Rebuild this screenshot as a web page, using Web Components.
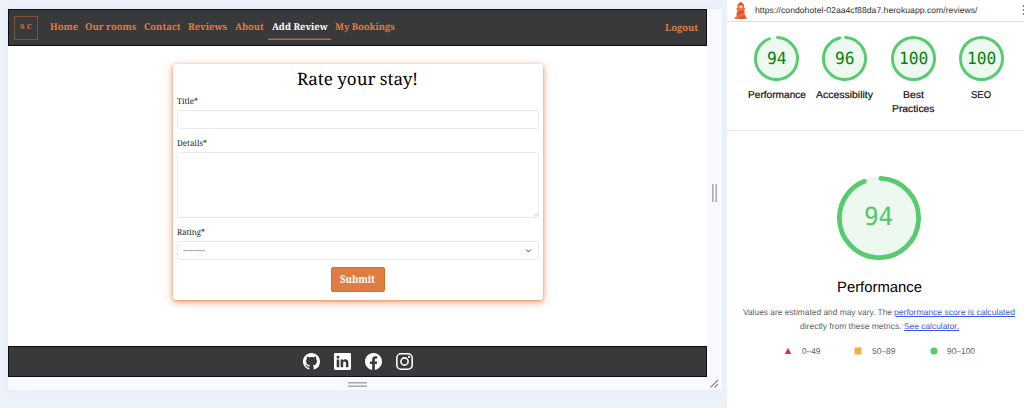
<!DOCTYPE html>
<html lang="en">
<head>
<meta charset="utf-8">
<title>Rate your stay</title>
<style>html,body{margin:0;height:408px;overflow:hidden;background:#ecf1fa;text-rendering:geometricPrecision}</style>
</head>
<body>
<audit-workspace></audit-workspace>
<script>
class Base extends HTMLElement {
  constructor() {
    super();
    this.attachShadow({ mode: 'open' });
  }
  draw(css, html) {
    this.shadowRoot.innerHTML = `<style>*{box-sizing:border-box}${css}</style>${html}`;
  }
}

/* One line of text fitted to a given width. */
customElements.define('fit-text', class extends Base {
  connectedCallback() {
    const w = +this.getAttribute('w');
    this.draw(`:host{display:inline-block;width:${w}px;white-space:nowrap;text-align:left}
      span{display:inline-block;transform-origin:0 50%;text-decoration:inherit}`, '<span><slot></slot></span>');
    const s = this.shadowRoot.querySelector('span');
    const n = s.getBoundingClientRect().width;
    if (n) s.style.transform = `scaleX(${w / n})`;
  }
});

customElements.define('nav-link', class extends Base {
  connectedCallback() {
    const on = this.hasAttribute('active');
    this.draw(`:host{display:block;height:24px;padding:4.5px 3.8px 0;box-shadow:${on ? 'inset 0 -1.5px #b9683b' : 'none'};
      font:bold 9.5px/14px "Noto Serif","DejaVu Serif Condensed","DejaVu Serif",serif;color:${on ? '#fff' : '#e07c42'}}`,
      `<fit-text w="${this.getAttribute('w')}">${this.getAttribute('label')}</fit-text>`);
  }
});

customElements.define('site-header', class extends Base {
  connectedCallback() {
    const items = [['Home', 28], ['Our rooms', 51.2], ['Contact', 36.7], ['Reviews', 39], ['About', 28.9], ['Add Review', 55.7], ['My Bookings', 59.8]];
    this.draw(`:host{display:flex;align-items:center;height:37px;background:#38393b;border:1px solid #0c1013;padding:0 5px}
      .logo{width:24px;height:24px;border:1px solid #80513a;color:#c87548;display:flex;align-items:center;justify-content:center;
        font:bold 6.9px/10px "Noto Serif","DejaVu Serif",serif}
      nav{display:flex;margin-left:8px}
      .out{margin-left:auto;margin-right:-.5px;padding-top:5px}`,
      `<div class="logo"><fit-text w="12">S C</fit-text></div><nav>${items.map(([t, w]) =>
        `<nav-link label="${t}" w="${w}" ${t === 'Add Review' ? 'active' : ''}></nav-link>`).join('')}</nav>
      <nav-link class="out" label="Logout" w="33"></nav-link>`);
  }
});

customElements.define('form-field', class extends Base {
  connectedCallback() {
    const kind = this.getAttribute('kind');
    const h = this.getAttribute('h');
    this.draw(`:host{display:block;font:8.2px/13px "Noto Serif","DejaVu Serif Condensed","DejaVu Serif",serif;color:#222}
      label{display:block;height:15px}
      .box{height:${h}px;border:1px solid #e9eaec;border-radius:3px;display:flex;align-items:center;justify-content:space-between;padding:0 6px 0 5px;color:#555}
      .box.area{align-items:flex-end;justify-content:flex-end;padding:0}`,
      `<label><fit-text w="${this.getAttribute('w')}">${this.getAttribute('label')}*</fit-text></label>
      <div class="box ${kind}">${kind === 'select'
        ? '<fit-text w="22">---------</fit-text><svg width="7" height="6" viewBox="0 0 7 6"><path d="M1 1.5 3.5 4 6 1.5" fill="none" stroke="#45494d" stroke-width="1"/></svg>'
        : kind === 'area' ? '<svg width="4" height="4"><path d="M0 3.5 3.5 0M2 3.5 3.5 2" stroke="#aaa" stroke-width=".6"/></svg>' : ''}</div>`);
  }
});

customElements.define('review-card', class extends Base {
  connectedCallback() {
    this.draw(`:host{display:block;width:370px;height:236px;background:#fff;border-radius:3px;padding:5px 4px 0;
        box-shadow:0 1px 3px #e07c42aa,0 2px 9px #e07c42aa;font-family:"Noto Serif","DejaVu Serif Condensed","DejaVu Serif",serif}
      h1{margin:0;font-weight:400;font-size:17px;line-height:20px;height:26px;text-align:center;color:#000}
      form-field+form-field{margin-top:8px}
      button{display:block;margin:7px auto 0;width:54px;height:25px;background:#e07c42;border:1px solid #d96f30;border-radius:2px;
        padding:0;color:#fff;font:bold 9.8px/14px "Noto Serif","DejaVu Serif Condensed","DejaVu Serif",serif}`,
      `<h1><fit-text w="121">Rate your stay!</fit-text></h1>
      <form-field label="Title" w="21" h="19"></form-field>
      <form-field label="Details" w="30" h="66" kind="area"></form-field>
      <form-field label="Rating" w="28" h="19" kind="select"></form-field>
      <button><fit-text w="35">Submit</fit-text></button>`);
  }
});

const ICONS = [
  'M8 0C3.58 0 0 3.58 0 8c0 3.54 2.29 6.53 5.47 7.59.4.07.55-.17.55-.38 0-.19-.01-.82-.01-1.49-2.01.37-2.53-.49-2.69-.94-.09-.23-.48-.94-.82-1.13-.28-.15-.68-.52-.01-.53.63-.01 1.08.58 1.23.82.72 1.21 1.87.87 2.33.66.07-.52.28-.87.51-1.07-1.78-.2-3.64-.89-3.64-3.95 0-.87.31-1.59.82-2.15-.08-.2-.36-1.02.08-2.12 0 0 .67-.21 2.2.82.64-.18 1.32-.27 2-.27s1.36.09 2 .27c1.53-1.04 2.2-.82 2.2-.82.44 1.1.16 1.92.08 2.12.51.56.82 1.27.82 2.15 0 3.07-1.87 3.75-3.65 3.95.29.25.54.73.54 1.48 0 1.07-.01 1.93-.01 2.2 0 .21.15.46.55.38A8.01 8.01 0 0 0 16 8c0-4.42-3.58-8-8-8',
  'M0 1.146C0 .513.526 0 1.175 0h13.65C15.474 0 16 .513 16 1.146v13.708c0 .633-.526 1.146-1.175 1.146H1.175C.526 16 0 15.487 0 14.854zm4.943 12.248V6.169H2.542v7.225zm-1.2-8.212c.837 0 1.358-.554 1.358-1.248-.015-.709-.52-1.248-1.342-1.248S2.4 3.226 2.4 3.934c0 .694.521 1.248 1.327 1.248zm4.908 8.212V9.359c0-.216.016-.432.08-.586.173-.431.568-.878 1.232-.878.869 0 1.216.662 1.216 1.634v3.865h2.401V9.25c0-2.22-1.184-3.252-2.764-3.252-1.274 0-1.845.7-2.165 1.193v.025h-.016l.016-.025V6.169h-2.4c.03.678 0 7.225 0 7.225z',
  'M16 8.049c0-4.446-3.582-8.05-8-8.05C3.58 0 0 3.603 0 8.05c0 4.017 2.926 7.347 6.75 7.951v-5.625H4.72V8.05h2.03V6.275c0-2.017 1.195-3.131 3.022-3.131.876 0 1.791.157 1.791.157v1.98h-1.009c-.993 0-1.303.621-1.303 1.258v1.51h2.218l-.354 2.326H9.25V16c3.824-.604 6.75-3.934 6.75-7.951'
];
customElements.define('site-footer', class extends Base {
  connectedCallback() {
    this.draw(`:host{display:flex;height:31px;background:#38393b;border:1px solid #0c1013;align-items:center;justify-content:center;gap:14px}
      svg{display:block;width:17px;height:17px;fill:#fff}`,
      ICONS.map(d => `<svg viewBox="0 0 16 16"><path d="${d}"/></svg>`).join('') +
      `<svg viewBox="0 0 16 16"><g fill="none" stroke="#fff" stroke-width="1.5"><rect x=".75" y=".75" width="14.5" height="14.5" rx="4"/><circle cx="8" cy="8" r="3.4"/></g><circle cx="12.3" cy="3.7" r="1"/></svg>`);
  }
});

customElements.define('device-frame', class extends Base {
  connectedCallback() {
    this.draw(`:host{display:grid;grid-template:368px 13px / 699px 15px;margin:9px 0 0 8px;background:#f8f9fd;width:714px;height:381px;
        box-shadow:0 0 6px #dce3f055}
      .page{display:flex;flex-direction:column;background:#fff}
      main{flex:1;display:flex;justify-content:center;padding:18px 0 0}
      .grip{display:flex;align-items:center;justify-content:center}
      .h{margin-top:2px}`,
      `<div class="page"><site-header></site-header><main><review-card></review-card></main><site-footer></site-footer></div>
      <div class="grip"><svg width="5" height="18"><path d="M.8 0v18M4.2 0v18" stroke="#a9a9a9" stroke-width="1.5"/></svg></div>
      <div class="grip"><svg class="h" width="19" height="5"><path d="M0 .8h19M0 4.2h19" stroke="#a9a9a9" stroke-width="1.5"/></svg></div>
      <div class="grip"><svg width="9" height="9" viewBox="0 0 9 9"><path d="M.5 8.5 8 1M4.5 8.5 8 5" stroke="#888" stroke-width="1.1"/></svg></div>`);
  }
});

customElements.define('score-gauge', class extends Base {
  connectedCallback() {
    const a = n => this.getAttribute(n);
    const size = +a('size'), sw = +a('stroke'), score = +a('score'), font = +a('font');
    const c = size / 2, r = c - sw / 2, len = 2 * Math.PI * r;
    const arc = score === 100 ? '' : `stroke-dasharray="${len * score / 100 - sw / 2} ${len}" transform="rotate(${-89 + sw / 4 / r * 57.3} ${c} ${c})"`;
    this.draw(`:host{display:block;position:relative;width:${size}px;height:${size}px}
      svg{display:block}
      .n{position:absolute;inset:0 0 ${font > 20 ? 3 : 0}px;display:flex;align-items:center;justify-content:center;color:${a('color')};
        font:${font}px/1 "DejaVu Sans Mono",monospace}`,
      `<svg width="${size}" height="${size}"><circle cx="${c}" cy="${c}" r="${c - .5}" fill="#edf9f0"/>
      <circle cx="${c}" cy="${c}" r="${r}" fill="none" stroke="#57cb70" stroke-width="${sw}" stroke-linecap="round" ${arc}/></svg>
      <div class="n"><fit-text w="${String(score).length * font * .585}">${score}</fit-text></div>`);
  }
});

customElements.define('category-score', class extends Base {
  connectedCallback() {
    this.draw(`:host{display:flex;flex-direction:column;align-items:center;width:68.2px;font:10px/14px "Liberation Sans",sans-serif;color:#111;
        -webkit-text-stroke:.2px #111}
      score-gauge{margin-bottom:8px;-webkit-text-stroke:0}`,
      `<score-gauge size="45" stroke="2.9" font="16.7" color="#0b800f" score="${this.getAttribute('score')}"></score-gauge><slot></slot>`);
  }
});

customElements.define('report-bar', class extends Base {
  connectedCallback() {
    this.draw(`:host{display:flex;height:22px;border-bottom:1px solid #dfe0e2;align-items:flex-start;font:8.5px/12px "Liberation Sans",sans-serif;color:#333}
      .ico{margin:1px 0 0 7px;flex:none}
      fit-text{margin:4px 0 0 7.5px}
      .more{margin:4px 0 0 auto;flex:none}`,
      `<svg class="ico" width="13" height="18" viewBox="0 0 13 18"><path d="M3.5 4 6.8 1 10 4v3h1v1.5h-1l1.3 7.5h1.2v2H.8v-2h1.4l1.2-7.5h-.9V7h1z" fill="#f0693d"/>
        <path d="M3.3 4.2 6.8 1 10.3 4.2zM3 11.8 10.2 9.2 10.5 11 2.7 13.8zM4 17.8 11.3 14.6 11.6 16 8 17.8z" fill="#d94a25"/><rect x="5.2" y="4.3" width="3.2" height="3" rx="1" fill="#ffdc63"/></svg>
      <fit-text w="222.5">https://condohotel-02aa4cf88da7.herokuapp.com/reviews/</fit-text>
      <svg class="more" width="3" height="13"><g fill="#777"><circle cx="2.5" cy="2" r=".9"/><circle cx="2.5" cy="6" r=".9"/><circle cx="2.5" cy="10" r=".9"/></g></svg>`);
  }
});

customElements.define('report-panel', class extends Base {
  connectedCallback() {
    this.draw(`:host{display:block;width:297px;height:408px;background:#fff;font-family:"Liberation Sans",sans-serif}
      .cats{display:flex;height:109px;border-bottom:1px solid #e2e2e2;padding:14px 0 0 15.7px}
      .perf{display:flex;flex-direction:column;align-items:center;padding:45.4px 0 0 7px}
      h2{margin:17.6px 0 0;font:400 15px/20px "Liberation Sans",sans-serif;color:#000}
      p{margin:7px 0 0;font-size:8.5px;line-height:14px;color:#616161}
      .line{display:flex;justify-content:center;gap:2.5px;height:14px}
      a{display:inline-block;color:#3b5ce8}
      a fit-text{text-decoration:underline}
      .scale{display:flex;width:191px;justify-content:space-between;margin:11px 0 0 50px;font-size:8.5px;line-height:14px;color:#616161;align-self:flex-start}
      .scale div{display:flex;align-items:center;gap:9.5px}
      svg{display:block}`,
      `<report-bar></report-bar>
      <section class="cats">
        <category-score score="94"><fit-text w="58">Performance</fit-text></category-score>
        <category-score score="96"><fit-text w="57">Accessibility</fit-text></category-score>
        <category-score score="100"><fit-text w="21">Best</fit-text><fit-text w="42.5">Practices</fit-text></category-score>
        <category-score score="100"><fit-text w="20">SEO</fit-text></category-score>
      </section>
      <section class="perf">
        <score-gauge size="84" stroke="4.8" font="25" color="#53c56b" score="94"></score-gauge>
        <h2><fit-text w="85">Performance</fit-text></h2>
        <p>
          <span class="line"><fit-text w="149">Values are estimated and may vary. The</fit-text><a><fit-text w="121">performance score is calculated</fit-text></a></span>
          <span class="line"><fit-text w="101.5">directly from these metrics.</fit-text><a><fit-text w="55">See calculator.</fit-text></a></span>
        </p>
        <div class="scale">
          <div><svg width="8" height="8"><path d="M4 .8 7.2 7H.8z" fill="#e2312a"/></svg><fit-text w="18.5">0–49</fit-text></div>
          <div><svg width="8" height="8"><rect x=".5" y=".5" width="7" height="7" fill="#f8ab43"/></svg><fit-text w="23.5">50–89</fit-text></div>
          <div><svg width="8" height="8"><circle cx="4" cy="4" r="3.6" fill="#57cb70"/></svg><fit-text w="28">90–100</fit-text></div>
        </div>
      </section>`);
  }
});

customElements.define('audit-workspace', class extends Base {
  connectedCallback() {
    this.draw(`:host{display:flex;justify-content:space-between;width:1024px;height:408px;background:#ecf1fa}
      report-panel{flex:none}`, '<device-frame></device-frame><report-panel></report-panel>');
  }
});
</script>
</body>
</html>
